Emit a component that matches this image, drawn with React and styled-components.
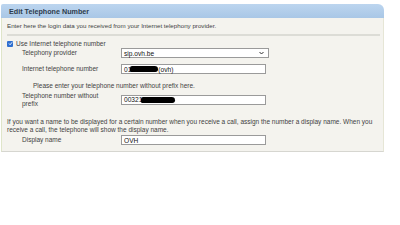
import React from "react";
import styled, { createGlobalStyle } from "styled-components";

const Global = createGlobalStyle`
  html, body {
    margin: 0;
    padding: 0;
    background: #ffffff;
    font-family: "Liberation Sans", Arial, sans-serif;
    color: #3f3f3f;
  }
`;

const Panel = styled.div`
  width: 383px;
  margin-top: 4px;
  margin-left: 1px;
`;

const Header = styled.div`
  height: 14px;
  display: flex;
  align-items: center;
  padding-left: 8px;
  font-size: 7.2px;
  font-weight: bold;
  color: #2e3c4c;
  background: linear-gradient(#bcd5ef, #a9c7e6);
  border-radius: 2px 6px 0 0;
`;

const Body = styled.div`
  background: #f4f3ee;
  border-left: 1px solid #dfe5c9;
  border-right: 1px solid #e6e6d6;
  border-bottom: 1px solid #d6d6d0;
  padding: 4px 0 6px 5px;
  font-size: 6.5px;
`;

const Intro = styled.div`
  font-size: 6.2px;
  padding-bottom: 5px;
  border-bottom: 2px solid #dcdcd6;
  margin-right: 3px;
`;

const CheckRow = styled.label`
  display: flex;
  align-items: center;
  gap: 3px;
  margin-top: 4px;
`;

const Box = styled.span`
  width: 6px;
  height: 6px;
  border-radius: 1px;
  background: #2f6fd0;
  display: flex;
  align-items: center;
  justify-content: center;
`;

const Row = styled.div`
  display: grid;
  grid-template-columns: 99px 1fr;
  align-items: center;
  padding-left: 15px;
  margin-top: ${(p) => p.$top}px;
`;

const Label = styled.div`
  line-height: 7.5px;
`;

const Field = styled.div`
  width: ${(p) => p.$w || 145}px;
  height: 10px;
  box-sizing: border-box;
  border: 1px solid #9a9a9a;
  background: #ffffff;
  display: flex;
  align-items: center;
  padding-left: 2px;
  font-size: 6.6px;
  color: #111;
`;

const Select = styled(Field)`
  justify-content: space-between;
  padding-right: 4px;
`;

const Blob = styled.span`
  display: inline-block;
  width: ${(p) => p.$w}px;
  height: 6px;
  background: #000;
  border-radius: 3px 5px 4px 2px;
  margin-left: -1px;
`;

const Hint = styled.div`
  padding-left: 26px;
  margin-top: 8px;
`;

const Note = styled.div`
  margin-top: 11px;
  line-height: 7.5px;
  padding-right: 4px;
`;

function Check() {
  return (
    <Box>
      <svg width="5" height="5" viewBox="0 0 10 10">
        <path d="M2 5 L4.2 7.5 L8.2 2.5" stroke="#fff" strokeWidth="1.8" fill="none" />
      </svg>
    </Box>
  );
}

export default function App() {
  return (
    <>
      <Global />
      <Panel>
        <Header>Edit Telephone Number</Header>
        <Body>
          <Intro>Enter here the login data you received from your Internet telephony provider.</Intro>
          <CheckRow>
            <Check />
            Use Internet telephone number
          </CheckRow>
          <Row $top={1}>
            <Label>Telephony provider</Label>
            <Select $w={148}>
              sip.ovh.be
              <svg width="5" height="4" viewBox="0 0 10 8">
                <path d="M1 2 L5 6 L9 2" stroke="#333" strokeWidth="2" fill="none" />
              </svg>
            </Select>
          </Row>
          <Row $top={6}>
            <Label>Internet telephone number</Label>
            <Field>
              01<Blob $w={28} />(ovh)
            </Field>
          </Row>
          <Hint>Please enter your telephone number without prefix here.</Hint>
          <Row $top={3}>
            <Label>
              Telephone number without
              <br />
              prefix
            </Label>
            <Field>
              00321<Blob $w={34} />
            </Field>
          </Row>
          <Note>
            If you want a name to be displayed for a certain number when you receive a call, assign the number a display name. When you receive a call, the telephone will show the display name.
          </Note>
          <Row $top={2}>
            <Label>Display name</Label>
            <Field>OVH</Field>
          </Row>
        </Body>
      </Panel>
    </>
  );
}
